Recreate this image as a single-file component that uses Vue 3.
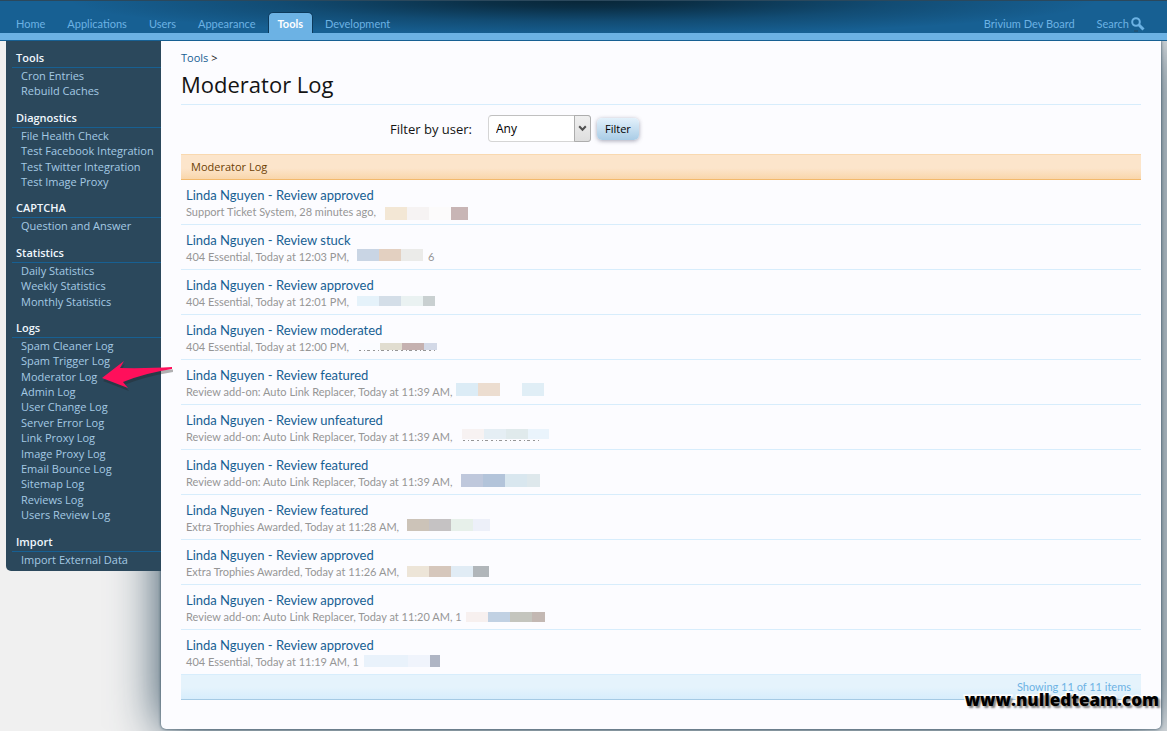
<script setup>
import { ref } from 'vue'

const tabs = ['Home', 'Applications', 'Users', 'Appearance', 'Tools', 'Development']
const activeTab = ref('Tools')

const groups = [
  { title: 'Tools', items: ['Cron Entries', 'Rebuild Caches'] },
  {
    title: 'Diagnostics',
    items: ['File Health Check', 'Test Facebook Integration', 'Test Twitter Integration', 'Test Image Proxy'],
  },
  { title: 'CAPTCHA', items: ['Question and Answer'] },
  { title: 'Statistics', items: ['Daily Statistics', 'Weekly Statistics', 'Monthly Statistics'] },
  {
    title: 'Logs',
    items: [
      'Spam Cleaner Log', 'Spam Trigger Log', 'Moderator Log', 'Admin Log', 'User Change Log',
      'Server Error Log', 'Link Proxy Log', 'Image Proxy Log', 'Email Bounce Log', 'Sitemap Log',
      'Reviews Log', 'Users Review Log',
    ],
  },
  { title: 'Import', items: ['Import External Data'] },
]

// mask: x/y/h of the mosaic inside the row, blocks are [width, colour]
const entries = [
  { action: 'approved', meta: 'Support Ticket System, 28 minutes ago,', mask: { x: 204, y: 27, h: 13, blocks: [[22, '#f3e7d5'], [22, '#f6f3f3'], [22, '#fcfbfb'], [17, '#c8b5b5']] } },
  { action: 'stuck', meta: '404 Essential, Today at 12:03 PM,', tail: '6', mask: { x: 176, y: 24, h: 12, blocks: [[22, '#c9d5e4'], [22, '#e3d0c1'], [22, '#ebebe9']] } },
  { action: 'approved', meta: '404 Essential, Today at 12:01 PM,', mask: { x: 176, y: 26, h: 10, blocks: [[22, '#e5f2fa'], [22, '#d4dee8'], [22, '#eaf2f2'], [12, '#c9d0d1']] } },
  { action: 'moderated', meta: '404 Essential, Today at 12:00 PM,', slivers: true, mask: { x: 177, y: 28, h: 7, blocks: [[22, '#fbfcff'], [22, '#e1ddd0'], [22, '#c5b1b0'], [13, '#d3d9e7']] } },
  { action: 'featured', meta: 'Review add-on: Auto Link Replacer, Today at 11:39 AM,', mask: { x: 275, y: 23, h: 13, blocks: [[22, '#dcecf6'], [22, '#ecddd0'], [22, '#fcfcff'], [22, '#e0eef6']] } },
  { action: 'unfeatured', meta: 'Review add-on: Auto Link Replacer, Today at 11:39 AM,', slivers: true, mask: { x: 281, y: 24, h: 10, blocks: [[22, '#f7f2f2'], [22, '#e5eef4'], [22, '#e0eaec'], [21, '#eaf4fc']] } },
  { action: 'featured', meta: 'Review add-on: Auto Link Replacer, Today at 11:39 AM,', mask: { x: 280, y: 24, h: 13, blocks: [[22, '#bfc8dc'], [22, '#b3c4da'], [22, '#d9e7ef'], [13, '#dee8ec']] } },
  { action: 'featured', meta: 'Extra Trophies Awarded, Today at 11:28 AM,', mask: { x: 226, y: 24, h: 12, blocks: [[22, '#ccc3b8'], [22, '#c5c2c3'], [22, '#e7f0ea'], [17, '#edf0f9']] } },
  { action: 'approved', meta: 'Extra Trophies Awarded, Today at 11:26 AM,', mask: { x: 226, y: 26, h: 11, blocks: [[22, '#ede5d8'], [22, '#d6c7bc'], [22, '#e1ecf5'], [16, '#b1b6ba']] } },
  { action: 'approved', meta: 'Review add-on: Auto Link Replacer, Today at 11:20 AM, 1', mask: { x: 285, y: 27, h: 10, blocks: [[22, '#f7f0ef'], [22, '#c1d1e3'], [22, '#c4c5be'], [13, '#c3b8b3']] } },
  { action: 'approved', meta: '404 Essential, Today at 11:19 AM, 1', mask: { x: 183, y: 25, h: 12, blocks: [[44, '#e9f2fb'], [22, '#f0f4fc'], [10, '#afb5c4']] } },
]
</script>

<template>
  <div class="page">
    <header class="topbar">
      <nav class="tabs">
        <a v-for="t in tabs" :key="t" href="#" class="tab" :class="{ active: t === activeTab }" @click.prevent="activeTab = t">{{ t }}</a>
      </nav>
      <div class="account">
        <a href="#">Brivium Dev Board</a>
        <a href="#" class="search">Search<svg width="14" height="15" viewBox="0 0 14 15"><circle cx="5" cy="5" r="3.8" fill="none" stroke="#6cb2e4" stroke-width="2" /><path d="M7.800 7.800L12.500 12.500" stroke="#6cb2e4" stroke-width="3" /><path d="M3 14H7" stroke="#2b485c" stroke-width="1" /></svg></a>
      </div>
    </header>

    <div class="body">
      <aside class="sidebar">
        <section v-for="g in groups" :key="g.title" class="group">
          <h2>{{ g.title }}</h2>
          <ul>
            <li v-for="i in g.items" :key="i"><a href="#">{{ i }}</a></li>
          </ul>
        </section>
      </aside>

      <main class="content">
        <div class="crumbs"><a href="#">Tools</a> &gt;</div>
        <h1>Moderator Log</h1>

        <form class="filter" @submit.prevent>
          <label for="user">Filter by user:</label>
          <div class="picker">
            <select id="user"><option>Any</option></select>
            <span class="drop"><svg width="9" height="7" viewBox="0 0 9 7"><path d="M1.200 1.200L4.500 4.800L7.800 1.200" fill="none" stroke="#505050" stroke-width="2" /></svg></span>
          </div>
          <button type="submit">Filter</button>
        </form>

        <h2 class="listHead">Moderator Log</h2>
        <ol class="entries">
          <li v-for="(e, n) in entries" :key="n">
            <a href="#">Linda Nguyen - Review {{ e.action }}</a>
            <p>{{ e.meta }}</p>
            <span v-if="e.tail" class="tail">{{ e.tail }}</span>
            <svg v-if="e.slivers" class="slivers" :style="{ left: e.mask.x + 'px' }" width="80" height="3" viewBox="0 0 80 3"><path d="M1 1.500H78" stroke="#969696" stroke-dasharray="2 3 1 2 3 3" /></svg>
            <span class="mask" :style="{ left: e.mask.x + 'px', top: e.mask.y + 'px', height: e.mask.h + 'px' }">
              <i v-for="(b, k) in e.mask.blocks" :key="k" :style="{ width: b[0] + 'px', background: b[1] }"></i>
            </span>
          </li>
        </ol>
        <div class="listFoot">Showing 11 of 11 items</div>
        <div class="watermark">www.nulledteam.com</div>
      </main>
    </div>

    <svg class="pointer" width="76" height="36" viewBox="0 0 76 36">
      <path d="M3 20L25 3L21 9.500Q50 9.500 73 8.500V11Q45 15.500 24 24L29 30Z" fill="#222" opacity=".35" transform="translate(0 2)" />
      <path d="M2 19L24 2L20 9Q50 9.500 72 8V10Q45 14 23 23L28 29Z" fill="#ff0f5b" />
    </svg>
  </div>
</template>

<style>
html {
  background: #f0f0f0;
}
</style>

<style scoped>
.page {
  position: relative;
  overflow: hidden;
  font: 11px "Trebuchet MS", "Open Sans", sans-serif;
  color: #141414;
}
a {
  text-decoration: none;
  color: #176093;
}
h1, h2, p, ul, ol {
  margin: 0;
  padding: 0;
  font-weight: 400;
  list-style: none;
}
.topbar {
  position: relative;
  z-index: 1;
  display: flex;
  justify-content: space-between;
  align-items: flex-end;
  height: 32px;
  padding: 0 22px 7px 6px;
  border-top: 1px solid #2b485c;
  border-bottom: 1px solid #176093;
  box-shadow: inset 0 -7px #6cb2e4;
  background:
    radial-gradient(ellipse 44% 34px at 50% 0, #082638 0, rgba(8, 38, 56, 0.85) 20%, rgba(8, 38, 56, 0.35) 60%, transparent 100%),
    #176093;
  font-family: "Trebuchet MS", Lato, sans-serif;
}
.tabs, .account {
  display: flex;
}
.tabs {
  gap: 2px;
}
.tab {
  height: 20px;
  padding: 0 9px;
  border: 1px solid transparent;
  border-bottom: 0;
  border-radius: 5px 5px 0 0;
  line-height: 22px;
  color: #6cb2e4;
}
.tab.active {
  border-color: #0c3a5c;
  background: #6cb2e4;
  color: #fff;
  font-weight: 700;
}
.account {
  gap: 22px;
  line-height: 18px;
}
.account a {
  color: #6cb2e4;
}
.search {
  display: flex;
  align-items: center;
  gap: 2px;
}
.body {
  display: flex;
  align-items: flex-start;
  padding: 0 6px 2px;
}
.sidebar {
  position: relative;
  z-index: 1;
  width: 155px;
  box-sizing: border-box;
  padding: 9px 0 4px 6px;
  border-radius: 0 0 0 5px;
  background: #2b485c;
  line-height: 1.4;
}
.group + .group {
  margin-top: 11px;
}
.group h2 {
  height: 17px;
  padding-left: 4px;
  border-bottom: 1px solid #176093;
  font-size: 11px;
  line-height: 16px;
  color: #f0f7fc;
  font-weight: 600;
}
.group li {
  padding-left: 9px;
  white-space: nowrap;
}
.group a {
  color: #a5cae4;
}
.content {
  position: relative;
  flex: 1;
  min-width: 0;
  padding: 8px 20px 29px;
  border-radius: 0 0 5px 5px;
  background: #fcfcff;
  box-shadow: 0 0 3px #2b485c, 0 0 50px #2b485c;
}
.crumbs {
  line-height: 18px;
}
h1 {
  height: 37px;
  border-bottom: 1px solid #d7edfc;
  font-size: 22px;
  line-height: 34px;
}
.filter {
  display: flex;
  align-items: center;
  box-sizing: border-box;
  height: 49px;
  padding-bottom: 2px;
}
.filter label {
  flex: 0 0 291px;
  margin-right: 16px;
  text-align: right;
  font-size: 13px;
}
.picker {
  position: relative;
  width: 103px;
}
select {
  appearance: none;
  display: block;
  width: 100%;
  height: 27px;
  padding: 0 7px;
  border: 1px solid #d5d5d5;
  border-top-color: #c0c0c0;
  border-radius: 4px;
  background: #fff;
  font: inherit;
  font-size: 12px;
  color: #000;
}
.drop {
  position: absolute;
  top: 0;
  right: 0;
  bottom: 0;
  width: 15px;
  display: flex;
  align-items: center;
  justify-content: center;
  border: 1px solid #adadad;
  border-radius: 0 3px 3px 0;
  background: linear-gradient(#efefef, #dedede);
  pointer-events: none;
}
button {
  height: 22px;
  margin-left: 6px;
  padding: 0 8px;
  border: 0;
  border-radius: 5px;
  background: linear-gradient(#e3f1fb, #a9cce6);
  box-shadow: 0 1px 4px rgba(60, 60, 90, 0.45);
  font: inherit;
  color: #000;
}
.listHead {
  padding: 0 10px;
  border-top: 1px solid #f9d9b0;
  border-bottom: 1px solid #f2b96c;
  background: linear-gradient(#fce5cb 55%, #f9d6ab);
  line-height: 24px;
  font-size: 11px;
  color: #6d3f03;
}
.entries, .listFoot {
  font-family: "Trebuchet MS", Lato, sans-serif;
}
.entries li {
  position: relative;
  box-sizing: border-box;
  height: 45px;
  padding: 6px 0 0 5px;
  border-bottom: 1px solid #d7edfc;
}
.entries a {
  display: block;
  font-size: 13px;
  line-height: 18px;
}
.entries p {
  line-height: 16px;
  color: #969696;
}
.mask {
  position: absolute;
  display: flex;
}
.tail {
  position: absolute;
  left: 247px;
  top: 24px;
  line-height: 16px;
  color: #969696;
}
.slivers {
  position: absolute;
  top: 34px;
}
.listFoot {
  padding: 0 10px;
  border-bottom: 1px solid #a5cae4;
  background: linear-gradient(#e5f3fc 50%, #d7edfc);
  line-height: 24px;
  text-align: right;
  color: #6cb2e4;
}
.watermark {
  position: absolute;
  right: 2px;
  bottom: 15px;
  font: 800 17px/28px "Open Sans", sans-serif;
  color: #000;
  -webkit-text-stroke: 3px #fff;
  paint-order: stroke fill;
  text-shadow: 2px 2px 2px rgba(0, 0, 0, 0.5);
}
.pointer {
  position: absolute;
  z-index: 2;
  left: 100px;
  top: 359px;
}
</style>
